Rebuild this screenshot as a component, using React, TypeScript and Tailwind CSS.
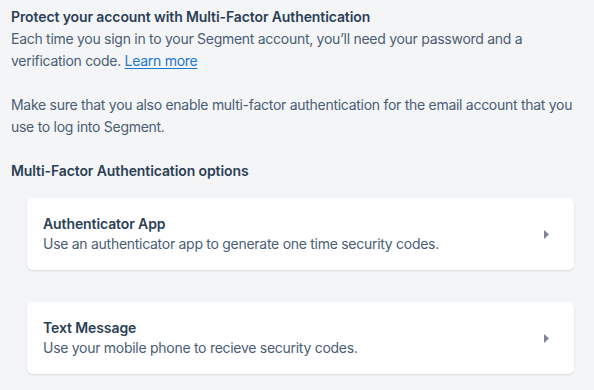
export default function App() {
  const options = [
    { title: 'Authenticator App', desc: 'Use an authenticator app to generate one time security codes.' },
    { title: 'Text Message', desc: 'Use your mobile phone to recieve security codes.' },
  ];

  return (
    <div className="min-h-[390px] w-[594px] bg-[#f4f5f7] px-[11px] pt-[6px] text-[14px] leading-[22px] tracking-[-0.28px] text-[#4a5d75] font-['Inter',sans-serif]">
      {/* Intro */}
      <p className="font-semibold tracking-[-0.1px] text-[#2b3f55]">Protect your account with Multi-Factor Authentication</p>
      <p>
        Each time you sign in to your Segment account, you’ll need your password and a verification code.{' '}
        <a href="#" className="text-[#1f77d0] underline underline-offset-2">Learn more</a>
      </p>
      <p className="mt-[22px]">
        Make sure that you also enable multi-factor authentication for the email account that you use to log into Segment.
      </p>

      <p className="mt-[22px] font-semibold tracking-[-0.1px] text-[#2b3f55]">Multi-Factor Authentication options</p>

      {/* Options */}
      <div className="mt-[16px] ml-[16px] mr-[9px] flex flex-col gap-[32px]">
        {options.map((o) => (
          <div
            key={o.title}
            className="flex items-center justify-between rounded-md bg-white px-4 py-4 leading-[20px] shadow-[0_1px_2px_rgba(40,60,90,0.15)]"
          >
            <div>
              <div className="font-semibold tracking-[-0.1px] text-[#2b3f55]">{o.title}</div>
              <div>{o.desc}</div>
            </div>
            <svg width="6" height="9" viewBox="0 0 6 9" className="mr-[8px]">
              <path d="M0 0 L5 4.5 L0 9 Z" fill="#7b8797" />
            </svg>
          </div>
        ))}
      </div>
    </div>
  );
}
